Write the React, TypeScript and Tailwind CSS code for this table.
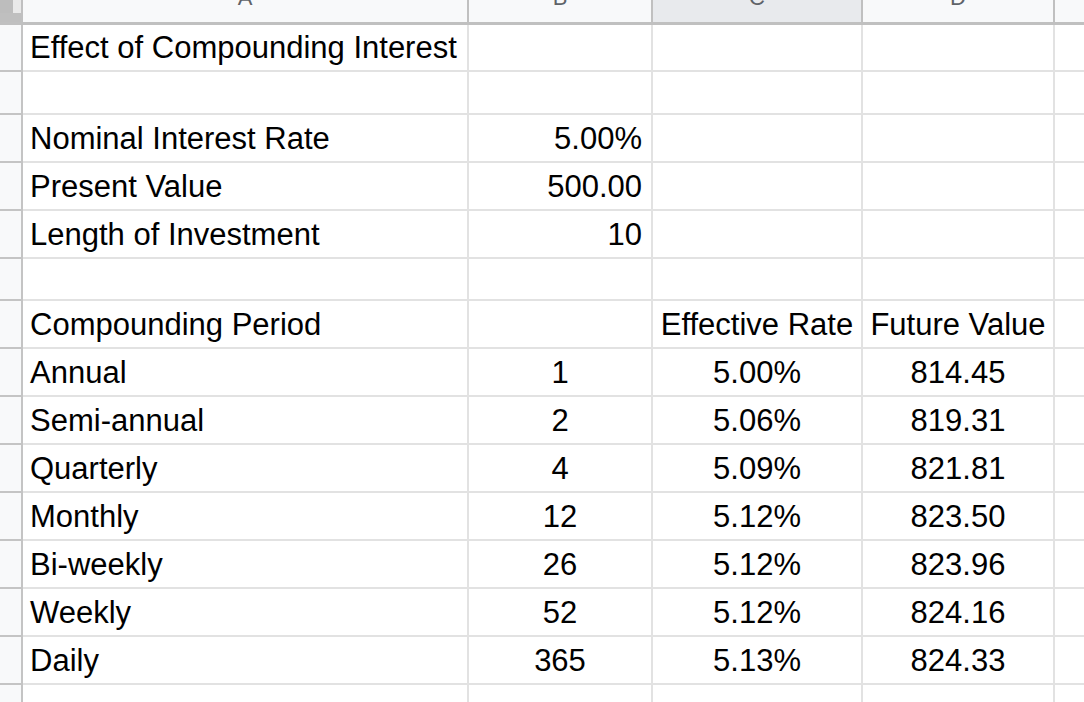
import React from "react";

type Align = "l" | "r" | "c";
type Cell = { t: string; a: Align };

const colW = ["w-[446px]", "w-[184px]", "w-[210px]", "w-[192px]"];
const rowH = [
  "h-[47px]",
  "h-[43px]",
  "h-[48px]",
  "h-[48px]",
  "h-[48px]",
  "h-[42px]",
  "h-[48px]",
  "h-[48px]",
  "h-[48px]",
  "h-[48px]",
  "h-[48px]",
  "h-[48px]",
  "h-[48px]",
  "h-[48px]",
  "h-[48px]",
];

const L = (t: string): Cell => ({ t, a: "l" });
const R = (t: string): Cell => ({ t, a: "r" });
const C = (t: string): Cell => ({ t, a: "c" });
const E: Cell = { t: "", a: "l" };

const data: Cell[][] = [
  [L("Effect of Compounding Interest"), E, E, E],
  [E, E, E, E],
  [L("Nominal Interest Rate"), R("5.00%"), E, E],
  [L("Present Value"), R("500.00"), E, E],
  [L("Length of Investment"), R("10"), E, E],
  [E, E, E, E],
  [L("Compounding Period"), E, C("Effective Rate"), C("Future Value")],
  [L("Annual"), C("1"), C("5.00%"), C("814.45")],
  [L("Semi-annual"), C("2"), C("5.06%"), C("819.31")],
  [L("Quarterly"), C("4"), C("5.09%"), C("821.81")],
  [L("Monthly"), C("12"), C("5.12%"), C("823.50")],
  [L("Bi-weekly"), C("26"), C("5.12%"), C("823.96")],
  [L("Weekly"), C("52"), C("5.12%"), C("824.16")],
  [L("Daily"), C("365"), C("5.13%"), C("824.33")],
  [E, E, E, E],
];

const alignCls: Record<Align, string> = {
  l: "justify-start pl-[7px]",
  r: "justify-end pr-[9px]",
  c: "justify-center",
};

const letters = ["A", "B", "C", "D"];

export default function App() {
  return (
    <div
      className="w-[1084px] h-[702px] overflow-hidden bg-white text-black"
      style={{ fontFamily: '"Liberation Sans", Arial, sans-serif' }}
    >
      {/* column header */}
      <div className="flex h-[25px] border-b-[3px] border-[#c0c0c0]">
        <div className="w-[23px] shrink-0 border-r-2 border-[#c0c0c0] bg-[#bfbfbf] flex flex-col">
          <div className="flex h-[13px]">
            <div className="w-[13px] bg-[#bdbdbd]" />
            <div className="flex-1 bg-[#e9e9e9]" />
          </div>
        </div>
        {letters.map((l, i) => (
          <div
            key={l}
            className={`${colW[i]} shrink-0 overflow-hidden border-r-2 border-[#c0c0c0] flex justify-center ${
              i === 2 ? "bg-[#e8eaed]" : "bg-[#f8f9fa]"
            }`}
          >
            <div className="text-[22px] leading-[20px] -mt-[12px] text-[#5f6368]">{l}</div>
          </div>
        ))}
        <div className="flex-1 bg-[#f8f9fa]" />
      </div>

      {/* body rows */}
      {data.map((row, r) => (
        <div key={r} className={`flex ${rowH[r]} shrink-0`}>
          <div className="w-[23px] shrink-0 bg-[#f8f9fa] border-r-2 border-b-2 border-[#c4c4c4]" />
          {row.map((cell, c) => (
            <div
              key={c}
              className={`${colW[c]} shrink-0 flex items-center border-r-2 border-b-2 border-[#e2e2e2] text-[31px] leading-none whitespace-nowrap ${alignCls[cell.a]}`}
            >
              {cell.t}
            </div>
          ))}
          <div className="flex-1 border-b-2 border-[#e2e2e2]" />
        </div>
      ))}
    </div>
  );
}
